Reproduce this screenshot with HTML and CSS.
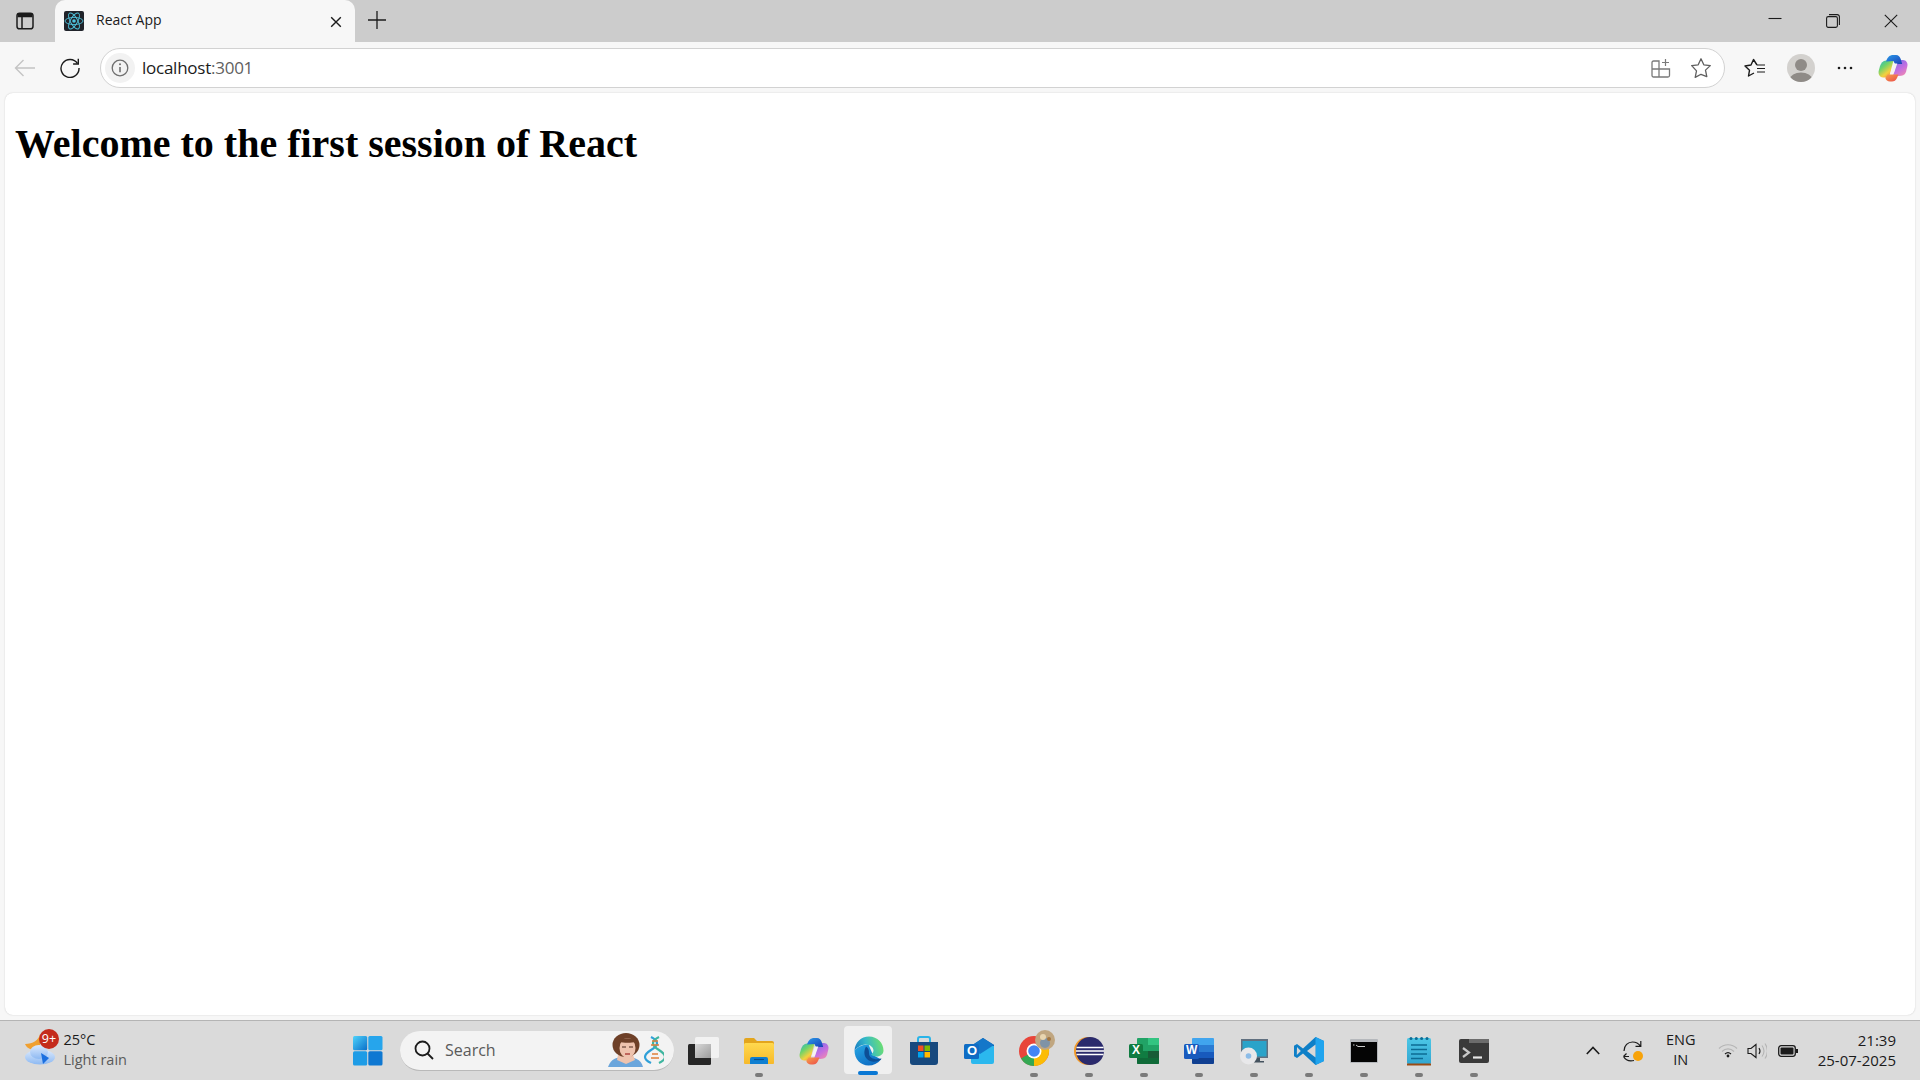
FILE: index.html
```html
<!DOCTYPE html>
<html lang="en">
<head>
<meta charset="utf-8">
<title>React App</title>
<link rel="stylesheet" href="styles.css">
</head>
<body>
<svg class="defs" width="0" height="0" aria-hidden="true">
  <defs>
    <linearGradient id="copL" x1="0" y1="0" x2=".7" y2="1">
      <stop offset="0" stop-color="#25b6c9"/><stop offset=".4" stop-color="#6fd36a"/><stop offset=".75" stop-color="#f3d13f"/><stop offset="1" stop-color="#f49a3c"/>
    </linearGradient>
    <linearGradient id="copT" x1="0" y1="0" x2="1" y2="1">
      <stop offset="0" stop-color="#2a9be8"/><stop offset="1" stop-color="#1b3fb8"/>
    </linearGradient>
    <linearGradient id="copR" x1=".2" y1="0" x2=".8" y2="1">
      <stop offset="0" stop-color="#7f6fe8"/><stop offset=".55" stop-color="#c46ee0"/><stop offset="1" stop-color="#f08ab0"/>
    </linearGradient>
    <linearGradient id="copB" x1="0" y1="0" x2="1" y2="1">
      <stop offset="0" stop-color="#f6a24a"/><stop offset="1" stop-color="#ec4a4a"/>
    </linearGradient>
    <linearGradient id="win" x1="0" y1="0" x2="1" y2="1">
      <stop offset="0" stop-color="#4fd3fb"/><stop offset="1" stop-color="#0a6fc9"/>
    </linearGradient>
    <linearGradient id="edge" x1="0" y1=".6" x2="1" y2=".4">
      <stop offset="0" stop-color="#1a7fc4"/><stop offset=".45" stop-color="#35b9c8"/><stop offset="1" stop-color="#6fe06e"/>
    </linearGradient>
    <linearGradient id="edgeB" x1="0" y1="0" x2=".6" y2="1">
      <stop offset="0" stop-color="#27a8e4"/><stop offset="1" stop-color="#0f6ec4"/>
    </linearGradient>
    <linearGradient id="folder" x1="0" y1="0" x2="0" y2="1">
      <stop offset="0" stop-color="#ffd94f"/><stop offset="1" stop-color="#f7b92a"/>
    </linearGradient>
    <linearGradient id="note" x1="0" y1="0" x2="0" y2="1">
      <stop offset="0" stop-color="#4cc7e6"/><stop offset="1" stop-color="#32a7d2"/>
    </linearGradient>
    <linearGradient id="cloud" x1="0" y1="0" x2="0" y2="1">
      <stop offset="0" stop-color="#dceafd"/><stop offset="1" stop-color="#8db9f2"/>
    </linearGradient>
    <linearGradient id="tv" x1="0" y1="0" x2="1" y2="1">
      <stop offset="0" stop-color="#d8d8d8"/><stop offset="1" stop-color="#9c9c9c"/>
    </linearGradient>
  </defs>
</svg>

<svg width="0" height="0" class="defs" aria-hidden="true">
  <symbol id="copilot-shape" viewBox="0 0 30 28">
    <path d="M8 6.500C5 6.500 3 9 2 12L.7 17C0 20.500 2 23.500 5 23.500H11L15.500 6.500z" fill="url(#copL)"/>
    <path d="M22 6H25C28 6 30 9 29.400 12L28 18C27 21 24 22 21 22H15L19 6.500z" fill="url(#copR)"/>
    <path d="M8 7.500C9.500 3 12 1 15 1H18C20.500 1 22 3 22.700 5L24.200 10H17L15.500 7z" fill="url(#copT)"/>
    <path d="M9.500 20.500H20.500L19 24C18 26.500 16 27.500 14 27.500H12C9.500 27.500 8 26 7.300 24z" fill="url(#copB)"/>
    <path d="M15.800 9.500H19.300L15.800 19.500H12.300z" fill="#f6f2f2"/>
  </symbol>
</svg>

<div class="browser">
  <header class="tabstrip">
    <button class="tab-toggle">
      <svg width="18" height="18" viewBox="0 0 18 18" fill="none" stroke="#1b1b1b" stroke-width="1.5"><rect x="1" y="1.200" width="16" height="15.600" rx="2.600"/><path d="M1.500 4.600h15M6 4.600v12"/><path d="M2 2h14v2.600H2z" fill="#1b1b1b" stroke="none"/></svg>
    </button>
    <div class="tab">
      <svg class="favicon" width="20" height="20" viewBox="0 0 20 20"><rect width="20" height="20" rx="2" fill="#20232a"/><g fill="none" stroke="#4fc3dc" stroke-width=".9"><ellipse cx="10" cy="10" rx="9" ry="3.600"/><ellipse cx="10" cy="10" rx="9" ry="3.600" transform="rotate(60 10 10)"/><ellipse cx="10" cy="10" rx="9" ry="3.600" transform="rotate(120 10 10)"/></g><circle cx="10" cy="10" r="1.800" fill="#4fc3dc"/></svg>
      <span class="tab-title">React App</span>
      <svg class="tab-close" width="12" height="12" viewBox="0 0 12 12" stroke="#1b1b1b" stroke-width="1.400"><path d="M1.200 1.200l9.600 9.600M10.800 1.200l-9.600 9.600"/></svg>
    </div>
    <svg class="tab-new" width="18" height="18" viewBox="0 0 18 18" stroke="#1b1b1b" stroke-width="1.300"><path d="M9 0v18M0 9h18"/></svg>
    <div class="win-controls">
      <svg width="14" height="14" viewBox="0 0 14 14" stroke="#1b1b1b" stroke-width="1.100"><path d="M.5 6.500h13"/></svg>
      <svg width="14" height="14" viewBox="0 0 14 14" fill="none" stroke="#1b1b1b" stroke-width="1.100"><rect x=".6" y="2.600" width="10.800" height="10.800" rx="1.600"/><path d="M3 .6h8.200a2.200 2.200 0 0 1 2.200 2.200V11"/></svg>
      <svg width="14" height="14" viewBox="0 0 14 14" stroke="#1b1b1b" stroke-width="1.100"><path d="M.8.8l12.400 12.400M13.200.8L.8 13.200"/></svg>
    </div>
  </header>

  <nav class="toolbar">
    <svg class="tb-back" width="22" height="18" viewBox="0 0 22 18" fill="none" stroke="#c4c4c4" stroke-width="1.400"><path d="M21 9H1.500M9.500 1L1.500 9l8 8"/></svg>
    <svg class="tb-reload" width="20" height="20" viewBox="0 0 20 20" fill="none" stroke="#1b1b1b" stroke-width="1.400"><path d="M17.500 5.500A9 9 0 1 0 19 10"/><path d="M18.300 .8v5.200h-5.200"/></svg>
    <div class="omnibox">
      <span class="site-info"><svg width="18" height="18" viewBox="0 0 18 18" fill="none" stroke="#6e6e6e" stroke-width="1.300"><circle cx="9" cy="9" r="7.800"/><path d="M9 8v5.200" stroke-width="1.600"/><circle cx="9" cy="5.300" r="1" fill="#6e6e6e" stroke="none"/></svg></span>
      <span class="url">localhost<span class="url-port">:3001</span></span>
      <svg class="omni-apps" width="20" height="20" viewBox="0 0 20 20" fill="none" stroke="#7a7a7a" stroke-width="1.300"><path d="M1 4.500A1.500 1.500 0 0 1 2.500 3H8v16H2.500A1.500 1.500 0 0 1 1 17.500zM1 11h17.500v6.500a1.500 1.500 0 0 1-1.500 1.500H8M8 11V3"/><path d="M14.500 1v7M11 4.500h7" stroke-width="1.200"/></svg>
      <svg class="omni-star" width="22" height="22" viewBox="0 0 22 22" fill="none" stroke="#5f5f5f" stroke-width="1.300" stroke-linejoin="round"><path d="M11 1.800l2.800 6 6.500.8-4.800 4.500 1.300 6.500L11 17.300l-5.800 3.100 1.300-6.500L1.700 8.600l6.500-.8z"/></svg>
    </div>
    <svg class="tb-fav" width="22" height="20" viewBox="0 0 22 20" fill="none" stroke="#1b1b1b" stroke-width="1.400" stroke-linejoin="round"><path d="M13 7L9.500 1.500 7 7 1 8l4.500 4.300L4.500 18l5.500-3"/><path d="M13 7h8M13 10.500h8M13 14h8" stroke-width="1.200"/></svg>
    <svg class="tb-avatar" width="28" height="28" viewBox="0 0 28 28"><defs><clipPath id="av"><circle cx="14" cy="14" r="14"/></clipPath></defs><circle cx="14" cy="14" r="14" fill="#d3d1ce"/><g clip-path="url(#av)" fill="#8f8b87"><circle cx="14" cy="11" r="6"/><ellipse cx="14" cy="25" rx="11" ry="6.500"/></g></svg>
    <svg class="tb-more" width="16" height="4" viewBox="0 0 16 4" fill="#1b1b1b"><circle cx="2" cy="2" r="1.300"/><circle cx="8" cy="2" r="1.300"/><circle cx="14" cy="2" r="1.300"/></svg>
    <svg class="tb-copilot" width="30" height="28" viewBox="0 0 30 28"><use href="#copilot-shape"/></svg>
  </nav>

  <main class="page">
    <h1 class="heading">Welcome to the first session of React</h1>
  </main>
</div>

<footer class="taskbar">
  <div class="weather">
    <span class="weather-icon">
      <svg width="32" height="36" viewBox="0 0 32 36"><path d="M16 3c-1 6-7 10-15 10 2 5 8 7 15 5z" fill="#f0a030"/><ellipse cx="16" cy="26" rx="15" ry="7.500" fill="url(#cloud)"/><ellipse cx="15" cy="21" rx="9" ry="7" fill="url(#cloud)"/><path d="M17 22l8 5-6 6z" fill="#1b6fe0"/></svg>
      <span class="badge">9+</span>
    </span>
    <span class="weather-text"><span class="temp">25°C</span><span class="cond">Light rain</span></span>
  </div>

  <div class="center">
    <svg class="start" width="30" height="30" viewBox="0 0 30 30"><rect x="0" y="0" width="14.200" height="14.200" rx="1.500" fill="url(#win)"/><rect x="15.300" y="0" width="14.200" height="14.200" rx="1.500" fill="#26a5ec"/><rect x="0" y="15.300" width="14.200" height="14.200" rx="1.500" fill="#1e9ce6"/><rect x="15.300" y="15.300" width="14.200" height="14.200" rx="1.500" fill="#0e78d2"/></svg>
    <div class="search">
      <svg class="search-glass" width="20" height="20" viewBox="0 0 20 20" fill="none" stroke="#1b1b1b" stroke-width="1.800"><circle cx="8.500" cy="8.500" r="7"/><path d="M13.500 13.500L19 19"/></svg>
      <span class="search-label">Search</span>
      <svg class="search-art" width="56" height="34" viewBox="0 0 56 34">
        <path d="M0 34c3-8 8-10 17-10s16 2 18 10z" fill="#6ba6dc"/>
        <path d="M10 22h15l2 5-9 4-9-4z" fill="#eec3ae"/>
        <ellipse cx="18" cy="12" rx="13.500" ry="12" fill="#6e4028"/>
        <ellipse cx="19.500" cy="15" rx="8" ry="10" fill="#eec3ae"/>
        <path d="M11 9c4-5 13-5 17 0-5 1-12 1-17 0z" fill="#6e4028"/>
        <path d="M14 14h4M21 14h4" stroke="#4a2a1e" stroke-width="1.100" fill="none"/>
        <path d="M17 21h5" stroke="#b0453f" stroke-width="1.500" fill="none"/>
        <path d="M43 4c8 4 8 8 0 13s-8 9 0 13" fill="none" stroke="#2fa0d8" stroke-width="2.200"/>
        <path d="M51 4c-8 4-8 8 0 13s8 9 0 13" fill="none" stroke="#3fb6a0" stroke-width="2.200"/>
        <path d="M44 8h6M43 12h8M44 21h6M43 25h8" stroke="#e0803a" stroke-width="1.300"/>
      </svg>
    </div>
    <div class="task-icons">
      <span class="task"><svg width="31" height="28" viewBox="0 0 31 28"><rect x="0" y="7" width="23" height="21" rx="1.500" fill="#262626"/><rect x="7" y="0" width="24" height="21" rx="1.500" fill="#f2f2f2"/><rect x="7" y="7" width="16" height="14" fill="url(#tv)"/></svg></span>
      <span class="task on"><svg width="30" height="28" viewBox="0 0 30 28"><path d="M0 3a2 2 0 0 1 2-2h8l3 3h15a2 2 0 0 1 2 2v19a2 2 0 0 1-2 2H2a2 2 0 0 1-2-2z" fill="#e3a51d"/><rect y="6" width="30" height="21" rx="1.500" fill="url(#folder)"/><path d="M6 27v-5a2 2 0 0 1 2-2h14a2 2 0 0 1 2 2v5z" fill="#0f7fd1"/><path d="M10 22.500h10" stroke="#0a4f8c" stroke-width="1.200"/></svg></span>
      <span class="task"><svg width="30" height="28" viewBox="0 0 30 28"><use href="#copilot-shape"/></svg></span>
      <span class="task active"><svg width="30" height="30" viewBox="0 0 30 30"><path d="M.5 14.500C.5 23 6.500 29.500 14.500 29.500c5 0 9-2 12.500-6L19 19 14.500 8.500C8 8.500 3 11.500.5 14.500z" fill="url(#edgeB)"/><path d="M12 10.500C9.500 15 10 20 13 23c3.500 3.500 9 3.500 14 .5.500-.4.500-.9 0-.9-3 1-7 1-9.500-.8-1.500-1-2.500-2.500-2.500-4.500 0-2.500 0-5-3-6.800z" fill="#0d4f96"/><path d="M.5 14.500C1 6.500 7 .5 15 .5c8.500 0 14.500 6.500 14.500 14 0 3.500-3 6-7 6-2.500 0-4.500-.8-5.500-2 1.500-1 2.500-2.500 2.500-4 0-3-3-6-8-6C7.500 8.500 3 11.500.5 14.500z" fill="url(#edge)"/></svg></span>
      <span class="task"><svg width="30" height="30" viewBox="0 0 30 30"><path d="M9 7V3a2 2 0 0 1 2-2h8a2 2 0 0 1 2 2v4" fill="none" stroke="#29b4e8" stroke-width="2"/><path d="M1 6h28v20a3 3 0 0 1-3 3H4a3 3 0 0 1-3-3z" fill="#17497e"/><rect x="9" y="9.500" width="5.500" height="5.500" fill="#f25022"/><rect x="15.500" y="9.500" width="5.500" height="5.500" fill="#7fba00"/><rect x="9" y="16" width="5.500" height="5.500" fill="#00a4ef"/><rect x="15.500" y="16" width="5.500" height="5.500" fill="#ffb900"/></svg></span>
      <span class="task"><svg width="30" height="28" viewBox="0 0 30 28"><path d="M7 9l12-8 11 7v6z" fill="#0f5fae"/><path d="M7 9h23v16a2 2 0 0 1-2 2H9a2 2 0 0 1-2-2z" fill="#2bb8ee"/><path d="M30 8l-14 9-9-6V9l12-8z" fill="#1477c9"/><rect x="0" y="7" width="15" height="15" rx="1.500" fill="#0f6cc4"/></svg><span class="outlook-o">O</span></span>
      <span class="task on"><svg class="chrome" width="36" height="36" viewBox="0 0 36 36"><circle cx="15" cy="21" r="15" fill="#e8453a"/><path d="M15 21L2 28.500A15 15 0 0 0 15 36z" fill="#34a853"/><path d="M15 21l13-7.500A15 15 0 0 1 15 36z" fill="#fbbc05"/><circle cx="15" cy="21" r="7.500" fill="#fff"/><circle cx="15" cy="21" r="5.800" fill="#4285f4"/><circle cx="26" cy="10" r="10" fill="#c0a680"/><circle cx="26" cy="13" r="5" fill="#7f93a6"/><circle cx="24" cy="7" r="3" fill="#e8d5b0"/><circle cx="30" cy="9" r="2" fill="#a2753f"/></svg></span>
      <span class="task on"><svg width="30" height="28" viewBox="0 0 30 28"><ellipse cx="14" cy="14" rx="14" ry="14" fill="#f29a29"/><ellipse cx="16" cy="14" rx="14" ry="14" fill="#2a2a6c"/><path d="M2.500 10.500h27M2 14h28M2.500 17.500h27" stroke="#fff" stroke-width="1.500"/></svg></span>
      <span class="task on"><svg width="30" height="28" viewBox="0 0 30 28"><path d="M9 1a1 1 0 0 0-1 1v24a1 1 0 0 0 1 1h20a1 1 0 0 0 1-1V2a1 1 0 0 0-1-1z" fill="#21a366"/><path d="M19 1h10a1 1 0 0 1 1 1v6H19z" fill="#33c481"/><rect x="8" y="14" width="11" height="7" fill="#107c41"/><rect x="19" y="14" width="11" height="7" fill="#185c37"/><path d="M8 21h22v5a1 1 0 0 1-1 1H9a1 1 0 0 1-1-1z" fill="#0f6a38"/><rect x="0" y="7" width="14" height="14" rx="1.500" fill="#107c41"/></svg><span class="app-letter xl">X</span></span>
      <span class="task on"><svg width="30" height="28" viewBox="0 0 30 28"><path d="M9 1a1 1 0 0 0-1 1v6h22V2a1 1 0 0 0-1-1z" fill="#41a5ee"/><rect x="8" y="8" width="22" height="7" fill="#2b7cd3"/><rect x="8" y="15" width="22" height="6" fill="#185abd"/><path d="M8 21h22v5a1 1 0 0 1-1 1H9a1 1 0 0 1-1-1z" fill="#103f91"/><rect x="0" y="7" width="15" height="15" rx="1.500" fill="#185abd"/></svg><span class="app-letter wd">W</span></span>
      <span class="task on"><svg width="30" height="30" viewBox="0 0 30 30"><rect x="2" y="3" width="27" height="19" fill="#607080"/><rect x="3.500" y="5" width="24" height="15.500" fill="#2aa3c9"/><path d="M15 22h6v3h4v1.500H15z" fill="#44525e"/><circle cx="9.500" cy="20" r="8.500" fill="#e8e8ea"/><circle cx="9.500" cy="20" r="2.800" fill="#8cbce8"/></svg></span>
      <span class="task on"><svg width="30" height="30" viewBox="0 0 30 30"><path d="M21.500 1L30 5v20l-8.500 4L9 17.500 3 22l-3-1.800v-10.400L3 8l6 4.500z" fill="#0e7fc7"/><path d="M21.500 1L30 5v20l-8.500 4z" fill="#20a4ee"/><path d="M21.500 8.500L13 15l8.500 6.500z" fill="#d8d8d8"/><path d="M3 11l-.2 8 4-4z" fill="#d8d8d8"/></svg></span>
      <span class="task on"><svg width="28" height="24" viewBox="0 0 28 24"><rect width="28" height="24" rx="1" fill="#b5b8bc"/><rect x="1" y="3" width="26" height="20" fill="#050505"/><path d="M3 6h1.500M6 6l2 1.500H15" stroke="#c8c8c8" stroke-width="1" fill="none"/></svg></span>
      <span class="task on"><svg width="24" height="30" viewBox="0 0 24 30"><rect x="0" y="2" width="24" height="26" rx="1.500" fill="url(#note)"/><rect x="0" y="27.500" width="24" height="2" fill="#9a4c16"/><path d="M4 9h16M4 13.500h16M4 18h16M4 22.500h12" stroke="#0d6c94" stroke-width="1.600"/><g fill="#0d6c94"><circle cx="4" cy="2.500" r="1.500"/><circle cx="9.300" cy="2.500" r="1.500"/><circle cx="14.600" cy="2.500" r="1.500"/><circle cx="20" cy="2.500" r="1.500"/></g></svg></span>
      <span class="task on"><svg width="30" height="24" viewBox="0 0 30 24"><path d="M0 2a2 2 0 0 1 2-2h26a2 2 0 0 1 2 2v20a2 2 0 0 1-2 2H2a2 2 0 0 1-2-2z" fill="#3a3a3a"/><path d="M10 0h20v4H10z" fill="#6c6c6c"/><path d="M4 9l6 4.500-6 4.500" fill="none" stroke="#c8c8c8" stroke-width="2.200"/><path d="M14 18.500h9" stroke="#e8e8e8" stroke-width="2.200"/></svg></span>
    </div>
  </div>

  <div class="tray">
    <svg class="chev" width="14" height="9" viewBox="0 0 14 9" fill="none" stroke="#1b1b1b" stroke-width="1.600"><path d="M.8 8L7 1.500 13.200 8"/></svg>
    <svg class="sync" width="22" height="22" viewBox="0 0 22 22" fill="none" stroke="#1b1b1b" stroke-width="1.200"><path d="M2 11C2 5.500 6 2 10.500 2c3 0 6 1.300 8 4.200M18.800 1v5.300h-5.300"/><path d="M1.500 16.500h5.500M1.500 16.500l3-3M1.500 16.500c2 3.500 6 5 10.500 4"/><circle cx="16" cy="16" r="5" fill="#f7a30a" stroke="none"/></svg>
    <span class="lang"><span>ENG</span><span>IN</span></span>
    <svg class="wifi" width="20" height="15" viewBox="0 0 20 15" fill="none" stroke="#b5b5b5" stroke-width="1.200"><path d="M1 5.500c5-5 13-5 18 0M4 8.500c3.500-3.500 8.500-3.500 12 0"/><path d="M7 11c1.800-1.600 4.200-1.600 6 0" stroke="#1b1b1b"/><circle cx="10" cy="13" r="1.400" fill="#1b1b1b" stroke="none"/></svg>
    <svg class="vol" width="20" height="18" viewBox="0 0 20 18" fill="none" stroke="#1b1b1b" stroke-width="1.100"><path d="M1 6.500v5h3l5 4V2.500l-5 4z"/><path d="M12 6c1.200 1.800 1.200 4.200 0 6"/><path d="M15 3.500c2.400 3.300 2.400 7.700 0 11M18 1.500c3 4.600 3 10.400 0 15" stroke="#b5b5b5"/></svg>
    <svg class="batt" width="20" height="12" viewBox="0 0 20 12"><rect x=".7" y=".7" width="16.600" height="10.600" rx="2.500" fill="none" stroke="#1b1b1b" stroke-width="1.300"/><rect x="2.500" y="2.500" width="13" height="7" rx="1" fill="#1b1b1b"/><rect x="18" y="4" width="2" height="4" fill="#1b1b1b"/></svg>
    <span class="clock"><span>21:39</span><span>25-07-2025</span></span>
  </div>
</footer>
</body>
</html>
```

FILE: styles.css
```css
* { box-sizing: border-box; }
html, body { margin: 0; height: 100%; }
body {
  width: 1920px;
  height: 1080px;
  overflow: hidden;
  display: flex;
  flex-direction: column;
  background: #f7f7f7;
  font-family: "Open Sans", "Noto Sans", sans-serif;
  color: #1b1b1b;
}
svg { display: block; flex: none; }
.defs { position: absolute; }

.browser { flex: 1; display: flex; flex-direction: column; min-height: 0; }

.tabstrip {
  height: 42px;
  background: #cccccc;
  display: flex;
  align-items: center;
  padding-left: 16px;
  flex: none;
}
.tab-toggle { width: 18px; height: 18px; padding: 0; border: 0; background: none; margin-right: 21px; }
.tab {
  width: 300px;
  height: 42px;
  background: #f7f7f7;
  border-radius: 10px 10px 0 0;
  display: flex;
  align-items: center;
  padding: 0 10px 0 9px;
  position: relative;
}
.tab-title { flex: 1; margin-left: 12px; font-size: 14px; margin-top: -4px; }
.tab-close { margin-right: 3px; margin-top: 1px; }
.tab-new { margin-left: 13px; margin-top: -3px; }
.win-controls {
  margin-left: auto;
  padding-right: 22px;
  display: flex;
  gap: 44px;
  align-items: center;
  margin-top: -1px;
}
.win-controls svg:first-child { margin-top: -3px; }

.toolbar {
  height: 51px;
  display: flex;
  align-items: center;
  padding: 0 0 0 14px;
  flex: none;
}
.tb-back { margin-right: 24px; }
.tb-reload { margin-right: 20px; }
.omnibox {
  width: 1625px;
  height: 40px;
  background: #fff;
  border: 1.5px solid #d2d2d2;
  border-radius: 20px;
  display: flex;
  align-items: center;
  padding: 0 12px 0 4px;
}
.site-info {
  width: 30px;
  height: 30px;
  background: #f2f2f2;
  border-radius: 50%;
  display: flex;
  align-items: center;
  justify-content: center;
}
.url { flex: 1; margin-left: 7px; font-size: 17px; letter-spacing: -0.25px; margin-top: -1px; }
.url-port { color: #5f5f5f; }
.omni-apps { margin-right: 19px; }
.tb-fav { margin-left: 19px; }
.tb-avatar { margin-left: 21px; }
.tb-more { margin-left: 22px; }
.tb-copilot { margin-left: 25px; }

.page {
  flex: 1;
  min-height: 0;
  margin: 0 5px 5px;
  background: #fff;
  border-radius: 8px;
  box-shadow: 0 0 1.5px rgba(0,0,0,.22);
  padding: 10px 10px 0;
  overflow: hidden;
}
.heading {
  margin: 17.500px 0 0;
  font-family: "Liberation Serif", serif;
  font-size: 40px;
  font-weight: 700;
  line-height: 46px;
  color: #000;
}

.taskbar {
  height: 60px;
  flex: none;
  background: #dadada;
  border-top: 1px solid #b4b4b4;
  display: flex;
  align-items: center;
  position: relative;
}
.weather {
  display: flex;
  align-items: center;
  width: 353px;
  padding-left: 24px;
  flex: none;
}
.weather-icon { position: relative; width: 40px; height: 44px; display: block; padding-top: 2px; }
.badge {
  position: absolute;
  left: 15px;
  top: 0;
  width: 20px;
  height: 20px;
  border-radius: 50%;
  background: #c42b1c;
  color: #fff;
  font-size: 12.500px;
  line-height: 19px;
  text-align: center;
}
.weather-text { display: flex; flex-direction: column; font-size: 14.500px; line-height: 20px; margin-left: -.5px; margin-top: -2px; }
.cond { color: #5a5a5a; }

.center { display: flex; align-items: center; }
.start { margin-right: 17px; width: 30px; height: 30px; }
.search {
  width: 274px;
  height: 40px;
  background: #f3f3f3;
  border-radius: 20px;
  border-bottom: 1px solid #b9b9b9;
  display: flex;
  align-items: center;
  padding: 0 10px 0 14px;
}
.search-label { flex: 1; margin-left: 11px; font-size: 16px; color: #5a5a5a; }
.task-icons { display: flex; margin-left: 2px; }
.task {
  width: 55px;
  height: 59px;
  display: flex;
  align-items: center;
  justify-content: center;
  position: relative;
  flex: none;
}
.task.on::after {
  content: "";
  position: absolute;
  left: 24px;
  bottom: 3px;
  width: 8px;
  height: 4px;
  border-radius: 2px;
  background: #7a7a7a;
}
.task.active::before {
  content: "";
  position: absolute;
  left: 3px;
  top: 5px;
  width: 48px;
  height: 48px;
  border-radius: 4px;
  background: #f0f0f0;
}
.task.active svg { position: relative; }
.task.active::after {
  content: "";
  position: absolute;
  left: 17px;
  top: 50px;
  width: 20px;
  height: 4px;
  border-radius: 2px;
  background: #0a78d4;
}
.chrome { margin-top: -6px; margin-left: 6px; }
.app-letter, .outlook-o {
  position: absolute;
  font-family: "Liberation Sans", sans-serif;
  font-weight: 700;
  color: #fff;
  line-height: 1;
}
.outlook-o { left: 16px; top: 23px; font-size: 13px; }
.app-letter.xl { left: 16px; top: 23px; font-size: 12px; }
.app-letter.wd { left: 15px; top: 23px; font-size: 12px; }

.tray {
  margin-left: auto;
  display: flex;
  align-items: center;
  padding-right: 24px;
}
.chev { margin-right: 22px; }
.sync { margin-right: 21px; }
.lang {
  display: flex;
  flex-direction: column;
  align-items: center;
  font-size: 14.500px;
  line-height: 20px;
  width: 32px;
  margin-right: 21px;
  margin-top: -2px;
}
.wifi { margin-right: 9px; }
.vol { margin-right: 11px; }
.batt { margin-right: 20px; }
.clock {
  display: flex;
  flex-direction: column;
  align-items: flex-end;
  font-size: 15px;
  line-height: 20px;
  margin-top: -2px;
}
```
